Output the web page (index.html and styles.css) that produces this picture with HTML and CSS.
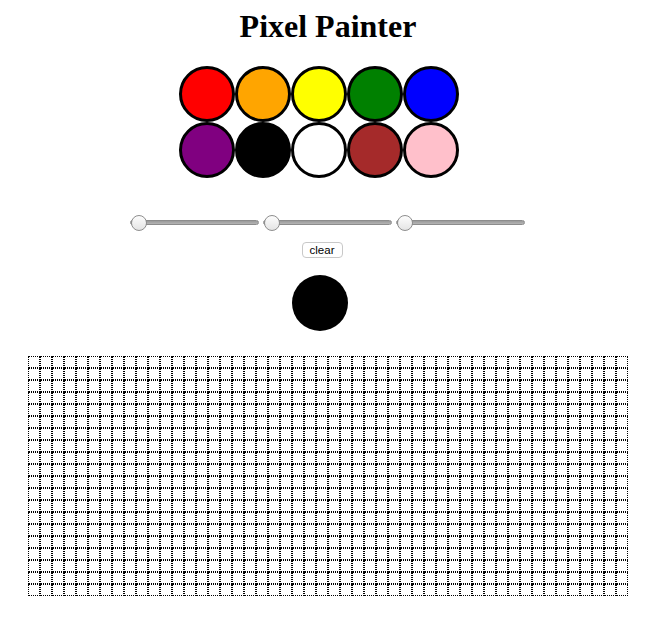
FILE: index.html
```html
<!DOCTYPE html>
<html>
<head>
<meta charset="utf-8">
<title>Pixel Painter</title>
<link rel="stylesheet" href="styles.css">
</head>
<body>
<h1 class="title">Pixel Painter</h1>
<div class="palette">
  <div class="swatches">
    <div class="swatch red"></div>
    <div class="swatch orange"></div>
    <div class="swatch yellow"></div>
    <div class="swatch green"></div>
    <div class="swatch blue"></div>
    <div class="swatch purple"></div>
    <div class="swatch black"></div>
    <div class="swatch white"></div>
    <div class="swatch brown"></div>
    <div class="swatch pink"></div>
  </div>
</div>
<div class="sliders">
  <input type="range" class="slider" min="0" max="255" value="0">
  <input type="range" class="slider" min="0" max="255" value="0">
  <input type="range" class="slider" min="0" max="255" value="0">
</div>
<div class="clear-row">
  <button class="clear-btn">clear</button>
</div>
<div class="current-row">
  <div class="current"></div>
</div>
<div class="grid" id="grid"></div>
<script src="script.js"></script>
</body>
</html>
```
FILE: styles.css
```css
html, body {
  margin: 0;
  padding: 0;
  background: #fff;
}
body {
  padding-top: 8px;
  font-family: "Liberation Serif", serif;
}
.title {
  margin: 0 0 21px 0;
  text-align: center;
  font-size: 32px;
  line-height: 37px;
  font-weight: bold;
  color: #000;
  padding-left: 1px;
}
.palette {
  display: flex;
  justify-content: center;
  padding-right: 17px;
}
.swatches {
  display: grid;
  grid-template-columns: repeat(5, 56px);
  grid-auto-rows: 56px;
}
.swatch {
  width: 50px;
  height: 50px;
  border: 3px solid #000;
  border-radius: 50%;
}
.red { background: red; }
.orange { background: orange; }
.yellow { background: yellow; }
.green { background: green; }
.blue { background: blue; }
.purple { background: purple; }
.black { background: black; }
.white { background: white; }
.brown { background: brown; }
.pink { background: pink; }

.sliders {
  display: flex;
  justify-content: center;
  margin-top: 36px;
  height: 16px;
  padding-right: 1px;
}
.slider {
  -webkit-appearance: none;
  appearance: none;
  width: 129px;
  height: 16px;
  margin: 0 2px;
  padding: 0;
  background: transparent;
}
.slider::-webkit-slider-runnable-track {
  height: 5px;
  background: linear-gradient(#9a9a9a, #b4b4b4);
  border: 1px solid #8c8c8c;
  border-radius: 3px;
  box-sizing: border-box;
}
.slider::-webkit-slider-thumb {
  -webkit-appearance: none;
  width: 16px;
  height: 16px;
  margin-top: -6px;
  border-radius: 50%;
  border: 1px solid #8e8e8e;
  box-sizing: border-box;
  background: linear-gradient(#fdfdfd, #e4e4e4);
}
.clear-row {
  display: flex;
  justify-content: center;
  margin-top: 12px;
  padding-right: 11px;
}
.clear-btn {
  height: 16px;
  width: 41px;
  padding: 0;
  background: #fff;
  border: 1px solid #c8c8c8;
  border-radius: 4px;
  font-family: "Liberation Sans", Arial, sans-serif;
  font-size: 11.5px;
  line-height: 14px;
  color: #000;
}
.current-row {
  display: flex;
  justify-content: center;
  margin-top: 17px;
  padding-right: 15px;
}
.current {
  width: 56px;
  height: 56px;
  border-radius: 50%;
  background: #000;
}
.grid {
  display: grid;
  grid-template-columns: repeat(50, 12px);
  grid-auto-rows: 12px;
  width: 600px;
  margin: 25px auto 0;
  position: relative;
  left: 0.5px;
}
.cell {
  box-sizing: border-box;
  width: 12px;
  height: 12px;
  border: 1px dotted #000;
  background: #fff;
}
```
FILE: script.js
```js
var grid = document.getElementById('grid');
var frag = document.createDocumentFragment();
for (var i = 0; i < 1000; i++) {
  var c = document.createElement('div');
  c.className = 'cell';
  frag.appendChild(c);
}
grid.appendChild(frag);
```
